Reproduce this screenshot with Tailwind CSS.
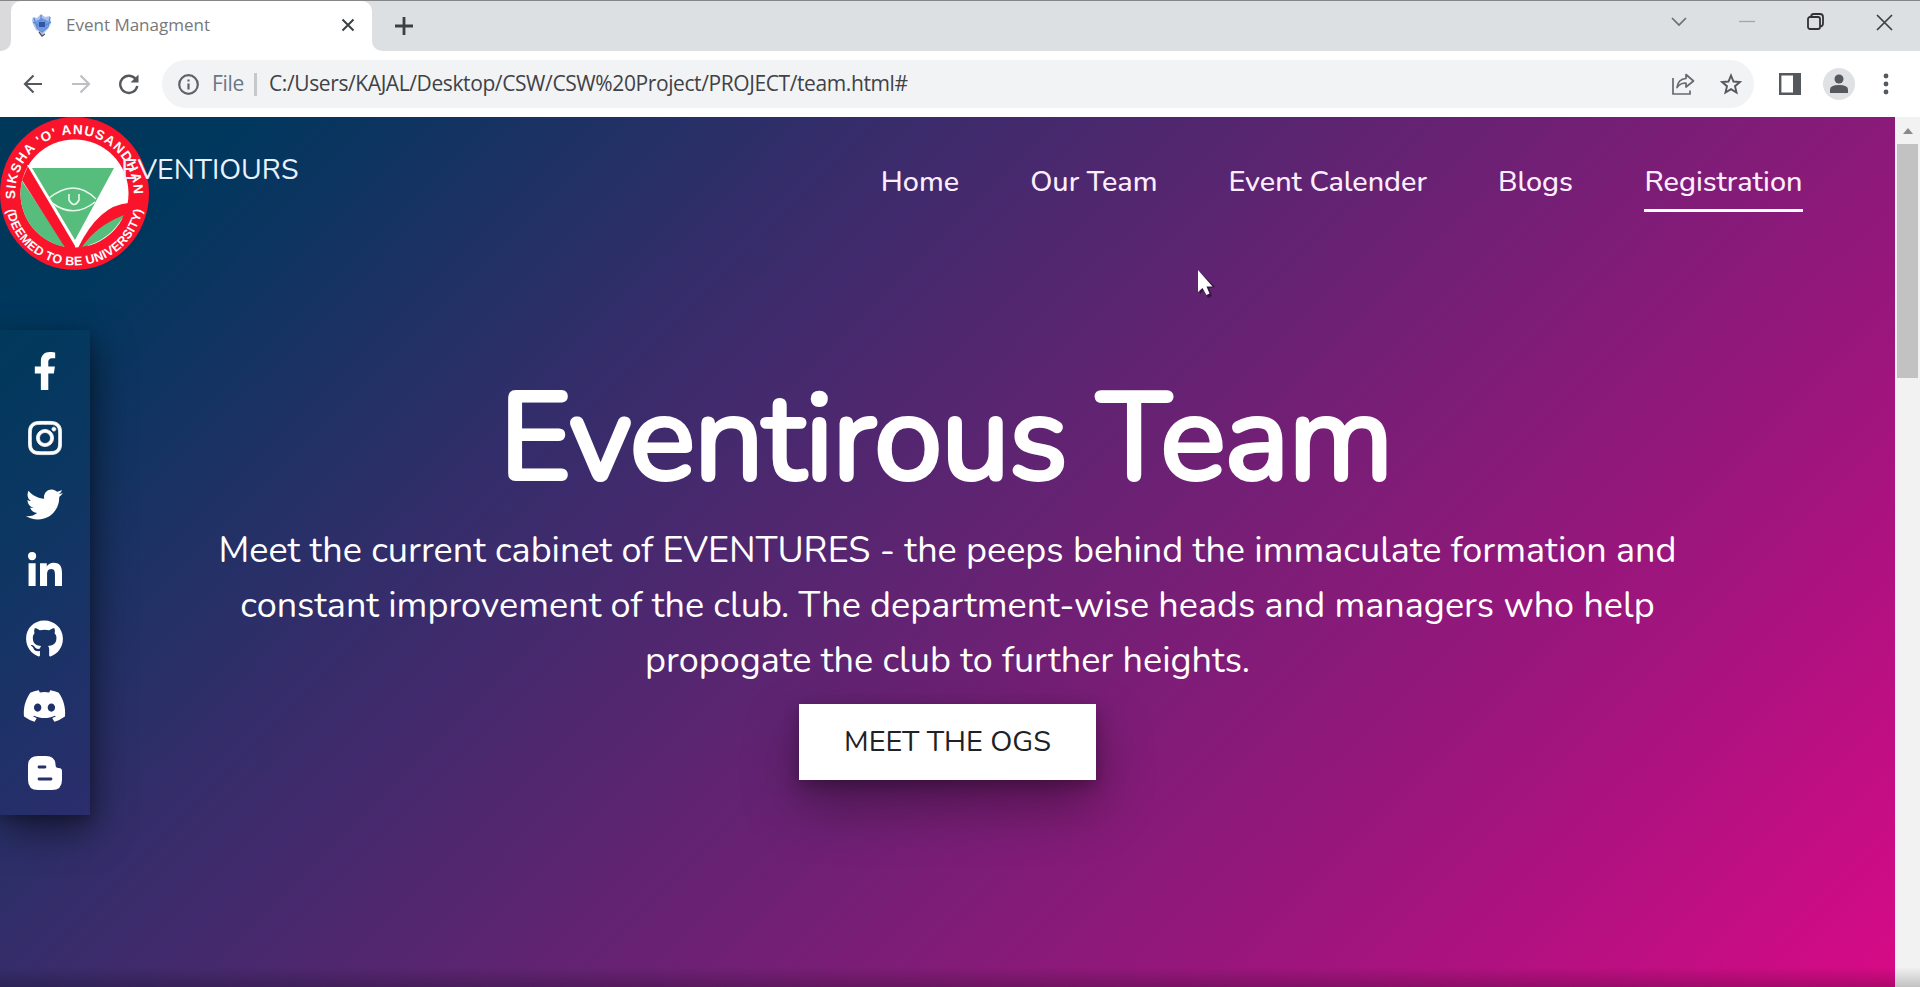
<!DOCTYPE html>
<html lang="en">
<head>
<meta charset="utf-8">
<title>Event Managment</title>
<script src="https://cdn.jsdelivr.net/npm/@tailwindcss/browser@4"></script>
</head>
<body class="w-[1920px] h-[987px] overflow-hidden flex flex-col bg-white font-['Nunito',Lato,sans-serif]">
<!-- Tab strip -->
<div class="h-[51px] shrink-0 bg-[#dce0e3] border-t border-[#858688] flex justify-between">
  <div class="flex">
    <div class="w-[11px] bg-white"><div class="h-full bg-[#dadadc] rounded-br-[10px]"></div></div>
    <div class="w-[361px] bg-white rounded-t-[10px] flex items-center pl-[20px] pr-[17px] pb-[2px]">
      <svg class="w-[22px] h-[24px]" viewBox="0 0 22 24"><path d="M2 4l4 1 4-4 4 3 5-1 1 7-3 6-3 3-3 4-1-3-5-3-3-6-1-4z" fill="#a9c2ee"/><path d="M5 8l6-3 6 3-1 6-5 4-5-4z" fill="#6f96dd"/><path d="M8 9h6v5H8z" fill="#2f55a4"/><path d="M3 5l3 10 5 4 6-5 2-10M2 9l5 3M20 9l-5 3M10 2v6" fill="none" stroke="#5b86d6" stroke-width="1.200"/><path d="M8 19l3 4 3-2" fill="none" stroke="#555" stroke-width="1.300"/></svg>
      <span class="ml-[13px] text-[17px] font-['Segoe_UI','Open_Sans',sans-serif] text-[#77787b] whitespace-nowrap">Event Managment</span>
      <svg class="ml-auto w-[14px] h-[14px]" viewBox="0 0 14 14" stroke="#3c4043" stroke-width="2"><path d="M1.500 1.500l11 11M12.500 1.500l-11 11"/></svg>
    </div>
    <div class="w-[40px] bg-white"><div class="h-full bg-[#dce0e3] rounded-bl-[10px] flex items-center pl-[23px]">
      <svg class="w-[18px] h-[18px] shrink-0 -mt-[1px]" viewBox="0 0 18 18" stroke="#3c4043" stroke-width="2.800"><path d="M0 9h18M9 0v18"/></svg></div></div>
  </div>
  <div class="flex h-[42px] items-center pr-[27px]">
    <svg class="w-[16px] h-[10px] mr-[52px]" viewBox="0 0 16 10" fill="none" stroke="#6b6e72" stroke-width="1.700"><path d="M1 1l7 7 7-7"/></svg>
    <svg class="w-[16px] h-[4px] mr-[52px]" viewBox="0 0 16 4" stroke="#a4a7aa" stroke-width="1.300"><path d="M0 1.500h16"/></svg>
    <svg class="w-[17px] h-[17px] mr-[52px] -mt-[1px]" viewBox="0 0 17 17" fill="none" stroke="#303236" stroke-width="1.800"><rect x="1" y="4" width="12" height="12" rx="2"/><path d="M4 3.500Q4.500 1 6.500 1H13q3 0 3 3v6.500Q16 13 13.500 13.500"/></svg>
    <svg class="w-[17px] h-[17px]" viewBox="0 0 17 17" stroke="#3c4043" stroke-width="1.700"><path d="M1 1l15 15M16 1L1 16"/></svg>
  </div>
</div>
<!-- Toolbar -->
<div class="h-[66px] shrink-0 bg-white flex items-center pl-[23px] pr-[31px]">
  <svg class="w-[20px] h-[20px]" viewBox="0 0 20 20" fill="none" stroke="#55585c" stroke-width="2.200"><path d="M19 10H2M10.500 1.500L2 10l8.500 8.500"/></svg>
  <svg class="w-[20px] h-[20px] ml-[28px]" viewBox="0 0 20 20" fill="none" stroke="#bdbfc2" stroke-width="2.200"><path d="M1 10h17M9.500 1.500L18 10l-8.500 8.500"/></svg>
  <svg class="w-[22px] h-[22px] ml-[27px]" viewBox="0 0 22 22" fill="none" stroke="#55585c" stroke-width="2.400"><path d="M18 6.500A8.600 8.600 0 1 0 19.300 13"/><path d="M20.500 1.500v8h-8z" fill="#55585c" stroke="none"/></svg>
  <div class="ml-[22px] w-[1592px] h-[48px] rounded-full bg-[#f2f3f4] flex items-center pl-[16px] pr-[12px] font-['Segoe_UI','Open_Sans',sans-serif] text-[21px]">
    <svg class="w-[21px] h-[21px]" viewBox="0 0 21 21" fill="none" stroke="#5f6368" stroke-width="2.200"><circle cx="10.500" cy="10.500" r="9.300"/><path d="M10.500 9.500v6M10.500 5.500v2"/></svg>
    <span class="ml-[13px] text-[#6b7687] tracking-[-0.3px]">File</span>
    <div class="ml-[10px] w-[3px] h-[23px] bg-[#c6c8cc]"></div>
    <span class="ml-[12px] text-[#404247] whitespace-nowrap tracking-[-0.4px]">C:/Users/KAJAL/Desktop/CSW/CSW%20Project/PROJECT/team.html#</span>
    <svg class="ml-auto w-[24px] h-[22px]" viewBox="0 0 24 22" fill="none" stroke="#66696d" stroke-width="1.700"><path d="M2 5v16h17v-3.500"/><path d="M6 14.500Q7 6 15 5.500V1.500L22.500 8 15 14v-4Q9 10 6 14.500z" stroke-linejoin="round"/></svg>
    <svg class="ml-[25px] w-[22px] h-[22px]" viewBox="0 0 22 22" fill="none" stroke="#55585c" stroke-width="1.900"><path d="M11 2.500l2.500 6 6.400.5-4.900 4.200 1.500 6.300L11 16.100l-5.500 3.400L7 13.200 2.100 9l6.400-.5z"/></svg>
  </div>
  <svg class="ml-[25px] w-[22px] h-[22px]" viewBox="0 0 22 22"><path d="M1.200 1.200h19.600v19.600H1.200z" fill="none" stroke="#55585c" stroke-width="2.400"/><path d="M14 1h7v20h-7z" fill="#55585c"/></svg>
  <div class="ml-[22px] w-[32px] h-[32px] rounded-full bg-[#dfe1e5] flex items-center justify-center"><svg class="w-[20px] h-[20px]" viewBox="0 0 20 20" fill="#55585c"><circle cx="10" cy="5" r="4.500"/><path d="M1 19v-3.500Q1 11 10 11t9 4.500V19z"/></svg></div>
  <svg class="ml-auto w-[6px] h-[22px]" viewBox="0 0 6 22" fill="#55585c"><circle cx="3" cy="3" r="2.400"/><circle cx="3" cy="11" r="2.400"/><circle cx="3" cy="19" r="2.400"/></svg>
</div>
<!-- Page viewport -->
<div class="flex-1 flex relative">
  <main class="w-[1895px] relative bg-[linear-gradient(135deg,#003859_0%,#00375d_9%,#352d6b_31%,#851b78_66%,#a2147e_79%,#d80a86_100%)]">
    <header class="flex justify-between">
      <div class="relative pl-[121px] pt-[37px]">
        <svg class="absolute left-0 top-0 w-[149px] h-[153px]" viewBox="0 0 149 153">
          <defs><path id="ringTop" d="M15.500 82A59.260 59.260 0 1 1 133.500 82"/><path id="ringBottom" d="M5.500 81A69 67.500 0 0 0 143.500 81"/></defs>
          <ellipse cx="74.500" cy="76.500" rx="74.500" ry="76.500" fill="#f9142c"/>
          <circle cx="74.500" cy="76.500" r="54" fill="#fff"/>
          <path d="M22 64A54 54 0 0 0 66 130z" fill="#56bd7c"/>
          <path d="M28 49l-6 14 43 67.500 10 4V124z" fill="#f9142c"/>
          <path d="M27 48h92L75 129z" fill="#fff"/>
          <path d="M32 51h82L75 123z" fill="#56bd7c"/>
          <path d="M128.500 86Q99 88 78 131l8-1 42-33z" fill="#f9142c"/>
          <path d="M124 98Q110 124 82 130q14-21 42-32z" fill="#56bd7c"/>
          <path d="M48 82q26-22 48 0M52 86q22 16 43-1M69 77v6q5 9 10 0v-6" fill="none" stroke="#e8f8ec" stroke-width="1.600"/>
          <g fill="#fff" font-family="Liberation Sans" font-weight="700" font-size="13.500">
            <text><textPath href="#ringTop" textLength="192">SIKSHA 'O' ANUSANDHAN</textPath></text>
            <text font-size="12.500"><textPath href="#ringBottom" startOffset="12" textLength="190">(DEEMED TO BE UNIVERSITY)</textPath></text>
          </g>
        </svg>
        <span class="relative block text-[28.5px] leading-[32px] text-[#e9f3ff] whitespace-nowrap">EVENTIOURS</span>
      </div>
      <nav class="flex gap-[71px] pt-[47px] pr-[92px] text-[28.8px] leading-[36px] font-medium text-[#fdeeff] whitespace-nowrap">
        <a>Home</a><a>Our Team</a><a>Event Calender</a><a>Blogs</a>
        <a class="block h-[48px] px-[0.5px] border-b-[3px] border-white">Registration</a>
      </nav>
    </header>
    <section class="absolute inset-x-0 top-[260px] flex flex-col items-center text-white">
      <h1><svg class="w-[1000px] h-[190px] -my-[30px] block overflow-visible" viewBox="0 0 1000 190"><text x="51.500" y="131.500" textLength="894" fill="#fff" stroke="#fff" stroke-width="4" stroke-linejoin="round" font-family="Nunito, Lato" font-size="123">Eventirous Team</text></svg></h1>
      <p class="mt-[16px] text-[36px] leading-[55px] flex flex-col items-center whitespace-nowrap">
        <span>Meet the current cabinet of EVENTURES - the peeps behind the immaculate formation and</span>
        <span>constant improvement of the club. The department-wise heads and managers who help</span>
        <span>propogate the club to further heights.</span>
      </p>
      <a class="mt-[15.500px] w-[297px] h-[76px] bg-white text-[#202124] text-[28.8px] flex items-center justify-center shadow-[0_25px_55px_rgba(0,0,0,0.35),0_6px_14px_rgba(0,0,0,0.25)]">MEET THE OGS</a>
    </section>
    <!-- Social links float over the hero -->
    <aside class="absolute left-0 top-[213px] w-[89.500px] h-[485px] py-[7px] flex flex-col items-center bg-[linear-gradient(135deg,#00395b_0%,#0b3762_35%,#2c2d6c_100%)] shadow-[4px_16px_38px_rgba(0,0,0,0.5),0_4px_10px_rgba(0,0,0,0.2)]">
      <div class="h-[67px] flex items-center"><svg class="w-[24px] h-[38px]" viewBox="0 0 320 512" fill="#fff"><path d="M279.140 288l14.220-92.660h-88.910v-60.130c0-25.350 12.420-50.060 52.240-50.060h40.420V6.260S260.430 0 225.360 0c-73.220 0-121.080 44.380-121.080 124.720v70.620H22.890V288h81.390v224h100.170V288z"/></svg></div>
      <div class="h-[67px] flex items-center"><svg class="w-[34px] h-[38px]" viewBox="0 0 448 512" fill="#fff" stroke="#fff" stroke-width="10"><path d="M224.100 141c-63.600 0-114.900 51.300-114.900 114.900s51.300 114.900 114.900 114.900S339 319.500 339 255.900 287.700 141 224.100 141zm0 189.600c-41.100 0-74.700-33.500-74.700-74.700s33.500-74.700 74.700-74.700 74.700 33.500 74.700 74.700-33.600 74.700-74.700 74.700zm146.400-194.300c0 14.900-12 26.800-26.800 26.800-14.900 0-26.800-12-26.800-26.800s12-26.800 26.800-26.800 26.800 12 26.800 26.800zm76.100 27.200c-1.700-35.900-9.900-67.700-36.200-93.900-26.200-26.200-58-34.400-93.900-36.200-37-2.100-147.900-2.100-184.900 0-35.800 1.700-67.600 9.900-93.900 36.100s-34.400 58-36.200 93.900c-2.100 37-2.100 147.900 0 184.900 1.700 35.900 9.900 67.700 36.200 93.900s58 34.400 93.900 36.200c37 2.100 147.900 2.100 184.900 0 35.900-1.700 67.700-9.900 93.900-36.200 26.200-26.200 34.400-58 36.200-93.900 2.100-37 2.100-147.800 0-184.800zM398.800 388c-7.800 19.600-22.900 34.700-42.600 42.600-29.500 11.700-99.500 9-132.100 9s-102.700 2.600-132.100-9c-19.600-7.800-34.700-22.900-42.600-42.600-11.700-29.500-9-99.500-9-132.100s-2.600-102.700 9-132.100c7.800-19.600 22.900-34.700 42.600-42.600 29.500-11.700 99.500-9 132.100-9s102.700-2.600 132.100 9c19.600 7.800 34.700 22.900 42.600 42.600 11.700 29.500 9 99.500 9 132.100s2.700 102.700-9 132.100z"/></svg></div>
      <div class="h-[67px] flex items-center"><svg class="w-[37px] h-[37px]" viewBox="0 0 512 512" fill="#fff"><path d="M459.370 151.716c.325 4.548.325 9.097.325 13.645 0 138.720-105.583 298.558-298.558 298.558-59.452 0-114.680-17.219-161.137-47.106 8.447.974 16.568 1.299 25.340 1.299 49.055 0 94.213-16.568 130.274-44.832-46.132-.975-84.792-31.188-98.112-72.772 6.498.974 12.995 1.624 19.818 1.624 9.421 0 18.843-1.300 27.614-3.573-48.081-9.747-84.143-51.980-84.143-102.985v-1.299c13.969 7.797 30.214 12.670 47.431 13.319-28.264-18.843-46.781-51.005-46.781-87.391 0-19.492 5.197-37.360 14.294-52.954 51.655 63.675 129.300 105.258 216.365 109.807-1.624-7.797-2.599-15.918-2.599-24.040 0-57.828 46.782-104.934 104.934-104.934 30.213 0 57.502 12.670 76.670 33.137 23.715-4.548 46.456-13.320 66.599-25.340-7.798 24.366-24.366 44.833-46.132 57.827 21.117-2.273 41.584-8.122 60.426-16.243-14.292 20.791-32.161 39.308-52.628 54.253z"/></svg></div>
      <div class="h-[67px] flex items-center"><svg class="w-[34px] h-[39px]" viewBox="0 0 448 512" fill="#fff"><path d="M100.280 448H7.400V148.900h92.880zM53.790 108.100C24.090 108.100 0 83.500 0 53.800a53.790 53.790 0 0 1 107.580 0c0 29.700-24.100 54.300-53.790 54.300zM447.900 448h-92.680V302.400c0-34.700-.7-79.200-48.290-79.200-48.290 0-55.690 37.700-55.690 76.700V448h-92.780V148.900h89.080v40.800h1.300c12.400-23.500 42.690-48.300 87.880-48.300 94 0 111.280 61.900 111.280 142.300V448z"/></svg></div>
      <div class="h-[67px] flex items-center"><svg class="w-[37px] h-[38px]" viewBox="0 0 496 512" fill="#fff"><path d="M244.800 8C106.100 8 0 113.300 0 252c0 110.900 69.800 205.800 169.500 239.200 12.800 2.300 17.300-5.600 17.300-12.100 0-6.200-.3-40.400-.3-61.400 0 0-70 15-84.700-29.800 0 0-11.400-29.100-27.800-36.600 0 0-22.900-15.700 1.600-15.400 0 0 24.900 2 38.600 25.800 21.900 38.600 58.600 27.500 72.900 20.900 2.300-16 8.800-27.100 16-33.700-55.900-6.200-112.300-14.300-112.300-110.500 0-27.500 7.600-41.300 23.600-58.900-2.600-6.500-11.100-33.300 2.600-67.900 20.900-6.500 69 27 69 27 20-5.600 41.500-8.500 62.800-8.500s42.800 2.900 62.800 8.500c0 0 48.100-33.600 69-27 13.700 34.700 5.200 61.400 2.600 67.900 16 17.700 25.800 31.500 25.800 58.900 0 96.500-58.900 104.200-114.800 110.500 9.200 7.900 17 22.900 17 46.400 0 33.700-.3 75.400-.3 83.600 0 6.500 4.600 14.400 17.300 12.100C428.200 457.800 496 362.900 496 252 496 113.300 383.500 8 244.800 8z"/></svg></div>
      <div class="h-[67px] flex items-center"><svg class="w-[45px] h-[36px]" viewBox="0 0 640 512" fill="#fff"><path fill-rule="evenodd" d="M524.531 69.836a1.500 1.500 0 0 0-.764-.7A485.065 485.065 0 0 0 404.081 32.030a1.816 1.816 0 0 0-1.923.910 337.461 337.461 0 0 0-14.900 30.600 447.848 447.848 0 0 0-134.426 0 309.541 309.541 0 0 0-15.135-30.600 1.890 1.890 0 0 0-1.924-.910A483.689 483.689 0 0 0 116.085 69.137a1.712 1.712 0 0 0-.788.676C39.068 183.651 18.186 294.690 28.430 404.354a2.016 2.016 0 0 0 .765 1.375A487.666 487.666 0 0 0 176.020 479.918a1.900 1.900 0 0 0 2.063-.676A348.200 348.200 0 0 0 208.120 430.400a1.860 1.860 0 0 0-1.019-2.588 321.173 321.173 0 0 1-45.868-21.853 1.885 1.885 0 0 1-.185-3.126c3.082-2.309 6.166-4.711 9.109-7.137a1.819 1.819 0 0 1 1.900-.256c96.229 43.917 200.410 43.917 295.500 0a1.812 1.812 0 0 1 1.924.233c2.944 2.426 6.027 4.851 9.132 7.160a1.884 1.884 0 0 1-.162 3.126 301.407 301.407 0 0 1-45.890 21.830 1.875 1.875 0 0 0-1 2.611 391.055 391.055 0 0 0 30.014 48.815 1.864 1.864 0 0 0 2.063.7A486.048 486.048 0 0 0 610.700 405.729a1.882 1.882 0 0 0 .765-1.352C623.729 277.594 590.933 167.465 524.531 69.836zM222.491 337.580c-28.972 0-52.844-26.587-52.844-59.239S193.056 219.100 222.491 219.100c29.665 0 53.306 26.820 52.843 59.239C275.334 310.993 251.924 337.580 222.491 337.580zm195.380 0c-28.971 0-52.843-26.587-52.843-59.239S388.437 219.100 417.871 219.100c29.667 0 53.307 26.820 52.844 59.239C470.715 310.993 447.538 337.580 417.871 337.580z"/></svg></div>
      <div class="h-[67px] flex items-center"><svg class="w-[34px] h-[34px]" viewBox="0 0 34 34"><path d="M10 0h8q9 0 9.500 8.500 0 3.500 3 3.500 3.500 0 3.500 3V24q0 10-10 10H10Q0 34 0 24V10Q0 0 10 0z" fill="#fff"/><path d="M11 11h6M11 23h12" stroke="#28306a" stroke-width="2.800" stroke-linecap="round"/></svg></div>
    </aside>
    <!-- Mouse pointer -->
    <svg class="absolute left-[1196px] top-[150px] w-[24px] h-[32px]" viewBox="0 0 24 32"><path d="M4 5v22l4-4 4 8 4-2-3-8 6-1z" fill="#1b0824" opacity=".6"/><path d="M2 3v22l4.500-4 4 7 3-1.500L10.500 19.500h6z" fill="#fff"/></svg>
  </main>
  <div class="w-[25px] bg-[#f1f2f1] flex flex-col items-center">
    <div class="h-[27px] flex items-center"><svg class="w-[10px] h-[6px]" viewBox="0 0 10 6" fill="#8a8a8a"><path d="M5 0l5 6H0z"/></svg></div>
    <div class="w-[21px] h-[234px] bg-[#c1c2c1]"></div>
  </div>
  <div class="absolute inset-x-0 bottom-0 h-[20px] bg-linear-to-b from-black/0 to-black/20"></div>
</div>
</body>
</html>
